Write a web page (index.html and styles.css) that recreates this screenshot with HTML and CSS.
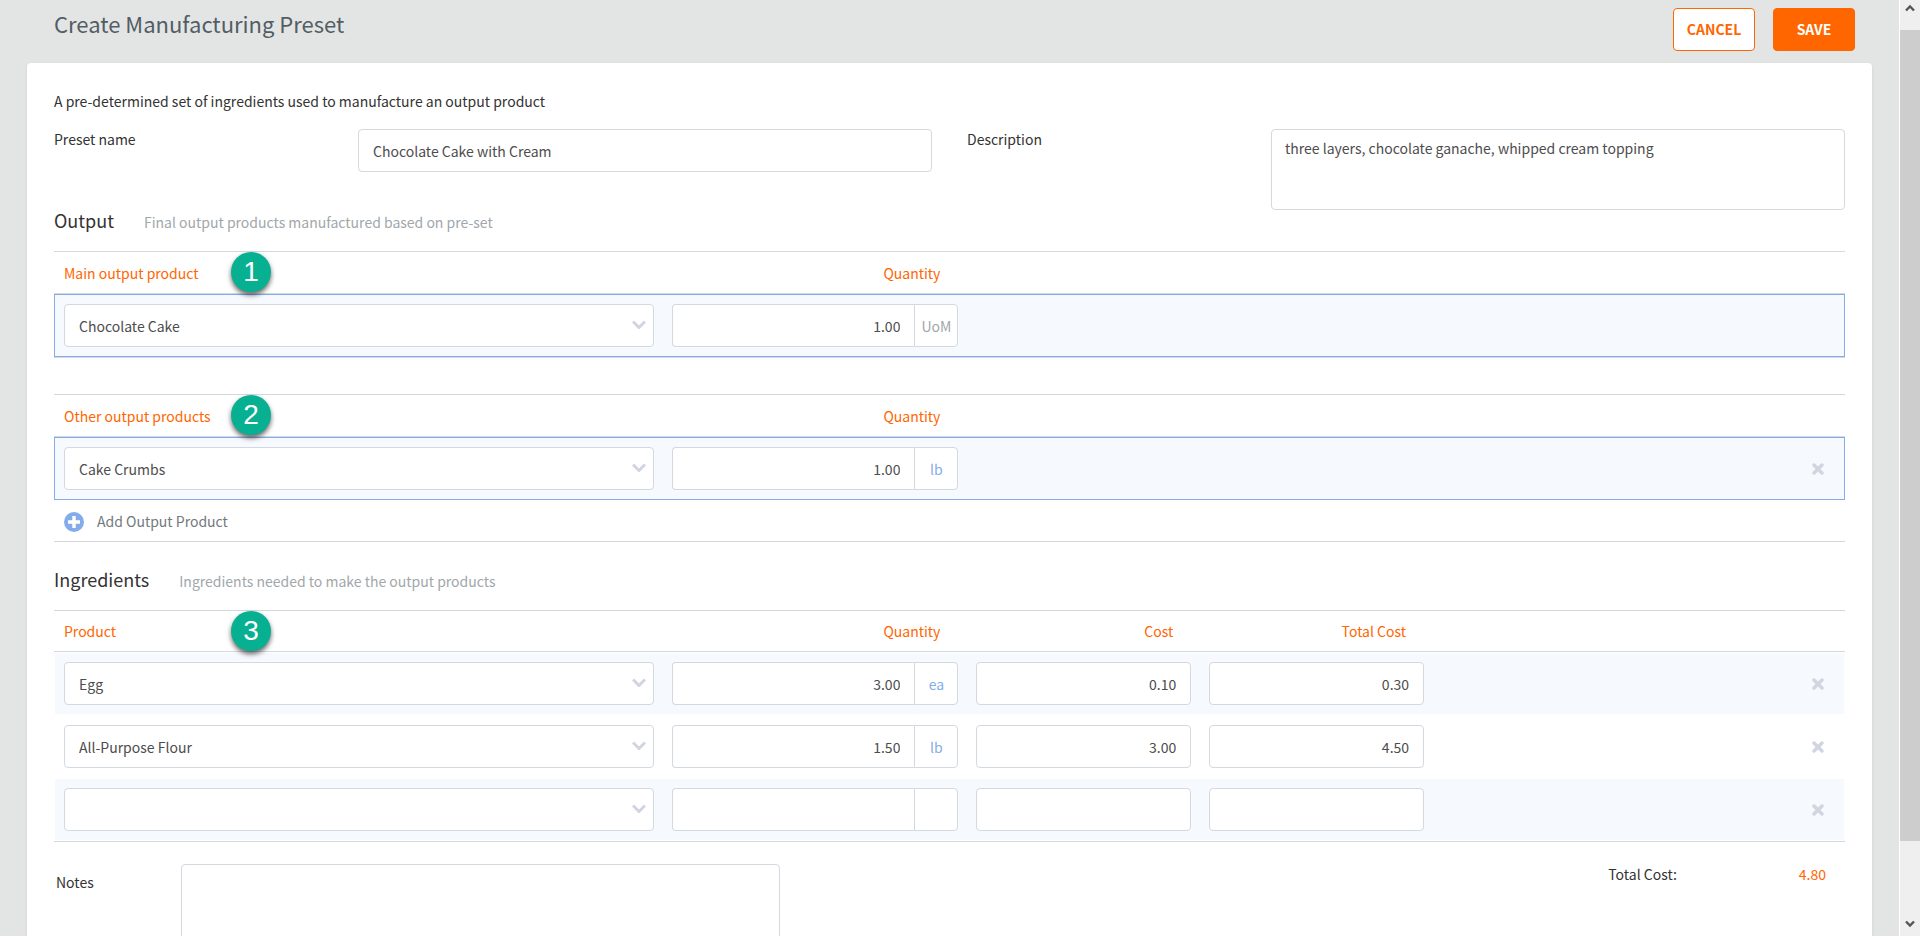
FILE: index.html
```html
<!DOCTYPE html>
<html lang="en">

<head>
    <meta charset="UTF-8">
    <meta name="viewport" content="width=device-width, initial-scale=1.0">
    <title>Create Manufacturing Preset</title>
    <link rel="stylesheet" href="styles.css">
</head>

<body>
    <!-- shared icons -->
    <svg class="icon-defs" aria-hidden="true">
        <symbol id="chevron" viewBox="0 0 14 9">
            <path d="M1 1.5l6 6 6-6" fill="none" stroke="currentColor" stroke-width="3" />
        </symbol>
        <symbol id="cross" viewBox="0 0 12 12">
            <path d="M2 2l8 8M10 2l-8 8" fill="none" stroke="currentColor" stroke-width="3.4" stroke-linecap="round" />
        </symbol>
        <symbol id="plus" viewBox="0 0 20 20">
            <circle cx="10" cy="10" r="10" fill="currentColor" />
            <path d="M10 4v12M4 10h12" stroke="#fff" stroke-width="3.4" />
        </symbol>
        <symbol id="arrow-up" viewBox="0 0 10 8">
            <path d="M1 6.5l4-4 4 4" fill="none" stroke="currentColor" stroke-width="2.4" />
        </symbol>
        <symbol id="arrow-down" viewBox="0 0 10 8">
            <path d="M1 1.5l4 4 4-4" fill="none" stroke="currentColor" stroke-width="2.4" />
        </symbol>
    </svg>

    <form class="page" id="presetForm">
        <header class="page-header">
            <h1>Create Manufacturing Preset</h1>
            <div class="button-group">
                <button type="button" class="btn btn-outline">CANCEL</button>
                <button type="submit" class="btn btn-primary">SAVE</button>
            </div>
        </header>

        <main class="card">
            <p class="intro">A pre-determined set of ingredients used to manufacture an output product</p>

            <div class="field-group">
                <div class="field">
                    <label for="presetName">Preset name</label>
                    <input type="text" id="presetName" class="control" value="Chocolate Cake with Cream">
                </div>
                <div class="field">
                    <label for="description">Description</label>
                    <textarea id="description" class="control description">three layers, chocolate ganache, whipped cream topping</textarea>
                </div>
            </div>

            <div class="section-title">
                <h2>Output</h2>
                <p>Final output products manufactured based on pre-set</p>
            </div>

            <table class="items highlight closed">
                <colgroup>
                    <col class="col-product">
                    <col class="col-quantity">
                    <col class="col-cost">
                    <col class="col-cost">
                    <col>
                </colgroup>
                <thead>
                    <tr>
                        <th>Main output product <span class="badge">1</span></th>
                        <th class="num">Quantity</th>
                        <th colspan="3"></th>
                    </tr>
                </thead>
                <tbody>
                    <tr>
                        <td>
                            <div class="select">
                                <select class="control" aria-label="Main output product">
                                    <option>Chocolate Cake</option>
                                </select>
                                <svg><use href="#chevron" /></svg>
                            </div>
                        </td>
                        <td>
                            <div class="quantity">
                                <input type="text" class="control" value="1.00" aria-label="Quantity">
                                <button type="button" class="unit unit-empty">UoM</button>
                            </div>
                        </td>
                        <td colspan="3"></td>
                    </tr>
                </tbody>
            </table>

            <table class="items highlight">
                <colgroup>
                    <col class="col-product">
                    <col class="col-quantity">
                    <col class="col-cost">
                    <col class="col-cost">
                    <col>
                </colgroup>
                <thead>
                    <tr>
                        <th>Other output products <span class="badge">2</span></th>
                        <th class="num">Quantity</th>
                        <th colspan="3"></th>
                    </tr>
                </thead>
                <tbody>
                    <tr>
                        <td>
                            <div class="select">
                                <select class="control" aria-label="Other output product">
                                    <option>Cake Crumbs</option>
                                </select>
                                <svg><use href="#chevron" /></svg>
                            </div>
                        </td>
                        <td>
                            <div class="quantity">
                                <input type="text" class="control" value="1.00" aria-label="Quantity">
                                <button type="button" class="unit">lb</button>
                            </div>
                        </td>
                        <td colspan="3" class="actions">
                            <button type="button" class="remove" aria-label="Remove"><svg><use href="#cross" /></svg></button>
                        </td>
                    </tr>
                </tbody>
            </table>
            <div class="add-row">
                <button type="button" class="add">
                    <svg><use href="#plus" /></svg>
                    <span>Add Output Product</span>
                </button>
            </div>

            <div class="section-title">
                <h2>Ingredients</h2>
                <p>Ingredients needed to make the output products</p>
            </div>

            <table class="items striped closed">
                <colgroup>
                    <col class="col-product">
                    <col class="col-quantity">
                    <col class="col-cost">
                    <col class="col-cost">
                    <col>
                </colgroup>
                <thead>
                    <tr>
                        <th>Product <span class="badge">3</span></th>
                        <th class="num">Quantity</th>
                        <th class="num">Cost</th>
                        <th class="num">Total Cost</th>
                        <th></th>
                    </tr>
                </thead>
                <tbody>
                    <tr>
                        <td>
                            <div class="select">
                                <select class="control" aria-label="Product">
                                    <option>Egg</option>
                                </select>
                                <svg><use href="#chevron" /></svg>
                            </div>
                        </td>
                        <td>
                            <div class="quantity">
                                <input type="text" class="control" value="3.00" aria-label="Quantity">
                                <button type="button" class="unit">ea</button>
                            </div>
                        </td>
                        <td><input type="text" class="control amount" value="0.10" aria-label="Cost"></td>
                        <td><input type="text" class="control amount" value="0.30" aria-label="Total cost"></td>
                        <td class="actions">
                            <button type="button" class="remove" aria-label="Remove"><svg><use href="#cross" /></svg></button>
                        </td>
                    </tr>
                    <tr>
                        <td>
                            <div class="select">
                                <select class="control" aria-label="Product">
                                    <option>All-Purpose Flour</option>
                                </select>
                                <svg><use href="#chevron" /></svg>
                            </div>
                        </td>
                        <td>
                            <div class="quantity">
                                <input type="text" class="control" value="1.50" aria-label="Quantity">
                                <button type="button" class="unit">lb</button>
                            </div>
                        </td>
                        <td><input type="text" class="control amount" value="3.00" aria-label="Cost"></td>
                        <td><input type="text" class="control amount" value="4.50" aria-label="Total cost"></td>
                        <td class="actions">
                            <button type="button" class="remove" aria-label="Remove"><svg><use href="#cross" /></svg></button>
                        </td>
                    </tr>
                    <tr>
                        <td>
                            <div class="select">
                                <select class="control" aria-label="Product">
                                    <option></option>
                                </select>
                                <svg><use href="#chevron" /></svg>
                            </div>
                        </td>
                        <td>
                            <div class="quantity">
                                <input type="text" class="control" aria-label="Quantity">
                                <button type="button" class="unit" aria-label="Unit"></button>
                            </div>
                        </td>
                        <td><input type="text" class="control amount" aria-label="Cost"></td>
                        <td><input type="text" class="control amount" aria-label="Total cost"></td>
                        <td class="actions">
                            <button type="button" class="remove" aria-label="Remove"><svg><use href="#cross" /></svg></button>
                        </td>
                    </tr>
                </tbody>
            </table>

            <div class="summary">
                <label for="notes">Notes</label>
                <textarea id="notes" class="control notes"></textarea>
                <p class="total">Total Cost: <span>4.80</span></p>
            </div>
        </main>
    </form>

    <div class="scrollbar" aria-hidden="true">
        <svg><use href="#arrow-up" /></svg>
        <div class="thumb"></div>
        <svg><use href="#arrow-down" /></svg>
    </div>
</body>

</html>
```

FILE: styles.css
```css
* {
    margin: 0;
    padding: 0;
    box-sizing: border-box;
}

body {
    display: flex;
    height: 100vh;
    overflow: hidden;
    background-color: #e3e5e4;
    color: #333;
    font-family: "Noto Sans CJK SC", "Open Sans", sans-serif;
    font-size: 14px;
    line-height: 20px;
}

button,
input,
select,
textarea {
    font: inherit;
    color: inherit;
}

button {
    border: none;
    background: none;
    cursor: pointer;
}

h1,
h2,
th {
    font-weight: 400;
}

.icon-defs {
    position: absolute;
    width: 0;
    height: 0;
}

.page {
    flex: 1;
    min-width: 0;
    padding: 8px 27px 0;
}

.page-header {
    display: flex;
    justify-content: space-between;
    align-items: flex-start;
    padding: 0 17px 12px 27px;
}

.page-header h1 {
    color: #525d64;
    font-size: 22px;
    line-height: 30px;
}

.button-group {
    display: flex;
    gap: 18px;
}

.btn {
    width: 82px;
    height: 43px;
    padding-bottom: 2px;
    border: 1px solid #ff6600;
    border-radius: 4px;
    font-weight: 700;
}

.btn-outline {
    background-color: #fff;
    color: #ff6600;
}

.btn-primary {
    background-color: #ff6600;
    color: #fff;
}

.card {
    padding: 28px 27px;
    background-color: #fff;
    border-radius: 4px 4px 0 0;
    box-shadow: 0 1px 3px rgba(0, 0, 0, 0.1);
}

.intro {
    margin-bottom: 18px;
}

.field-group {
    display: grid;
    grid-template-columns: 1fr 1fr;
    gap: 35px;
}

.field {
    display: grid;
    grid-template-columns: 304fr 574fr;
    align-items: start;
}

.control {
    display: block;
    width: 100%;
    height: 43px;
    padding: 0 14px;
    border: 1px solid #d3d9de;
    border-radius: 4px;
    background-color: #fff;
    color: #4d4d4d;
    outline: none;
}

textarea.control {
    padding: 8px 13px;
    resize: none;
}

textarea.description {
    height: 81px;
}

.section-title {
    display: flex;
    align-items: baseline;
    gap: 30px;
    margin-bottom: 19px;
}

.section-title h2 {
    font-size: 18px;
    line-height: 20px;
}

.section-title p {
    color: #a1a7ab;
}

/* product tables */
.items {
    width: 100%;
    table-layout: fixed;
    border-spacing: 0;
    border-top: 1px solid #d3d9dc;
}

.items.closed {
    border-bottom: 1px solid #d3d9dc;
}

.items.highlight.closed {
    margin-bottom: 36px;
}

.col-product {
    width: 34%;
}

.col-quantity {
    width: 17%;
}

.col-cost {
    width: 13%;
}

.items th {
    position: relative;
    height: 42px;
    padding: 0 10px;
    border-bottom: 1px solid #d3d9dc;
    color: #ff6600;
    text-align: left;
}

.items.striped th {
    height: 41px;
}

.items th.num {
    padding-right: 27px;
    text-align: right;
}

.items td {
    padding: 9px;
    border: 0 solid transparent;
    border-width: 1px 0;
    background-clip: padding-box;
}

.items td:first-child {
    border-left-width: 1px;
}

.items td:last-child {
    border-right-width: 1px;
}

.highlight td {
    border-color: #84aceb;
    background-color: #f6f9fe;
}

.striped tr:nth-child(odd) td {
    background-color: #f6f9fe;
}

.badge {
    position: absolute;
    top: 0;
    left: 177px;
    width: 40px;
    height: 40px;
    border-radius: 50%;
    background-color: #08b092;
    box-shadow: 0 3px 5px rgba(0, 0, 0, 0.6);
    color: #fff;
    font-family: "Liberation Sans", Arial, sans-serif;
    font-size: 28px;
    line-height: 40px;
    text-align: center;
}

.select {
    position: relative;
}

.select select {
    appearance: none;
}

.select svg {
    position: absolute;
    top: 16px;
    right: 8px;
    width: 14px;
    height: 9px;
    color: #d0d5e0;
    pointer-events: none;
}

.quantity {
    display: flex;
}

.quantity .control {
    flex: 1;
    min-width: 0;
    border-radius: 4px 0 0 4px;
    border-right: none;
    text-align: right;
}

.amount {
    text-align: right;
}

.unit {
    width: 44px;
    height: 43px;
    border: 1px solid #d3d9de;
    border-radius: 0 4px 4px 0;
    background-color: #fff;
    color: #84aceb;
}

.unit-empty {
    color: #a1a7ab;
}

.items .actions {
    padding-right: 20px;
    padding-bottom: 12px;
    text-align: right;
}

.remove {
    width: 12px;
    height: 12px;
    color: #d0d5e0;
    vertical-align: middle;
}

.remove svg {
    display: block;
    width: 12px;
    height: 12px;
}

.add-row {
    margin-bottom: 27px;
    padding: 11px 10px 9px;
    border-bottom: 1px solid #d3d9dc;
}

.add {
    display: flex;
    align-items: flex-end;
    gap: 13px;
    height: 21px;
    color: #73797d;
}

.add svg {
    width: 20px;
    height: 20px;
    color: #84aceb;
}

.add span {
    align-self: flex-start;
    line-height: 20px;
}

/* notes and total under the ingredients */
.summary {
    display: flex;
    align-items: flex-start;
    margin-top: 22px;
}

.summary label {
    width: 127px;
    padding: 8px 2px;
}

.summary .notes {
    width: calc(34% - 10px);
    height: 120px;
}

.total {
    display: flex;
    gap: 122px;
    margin-left: auto;
    padding-right: 19px;
}

.total span {
    color: #ff6600;
}

/* window scrollbar */
.scrollbar {
    display: flex;
    flex-direction: column;
    justify-content: space-between;
    align-items: center;
    width: 21px;
    padding: 4px 0 8px;
    border-left: 1px solid #fff;
    background-color: #efefef;
    color: #555;
}

.scrollbar svg {
    width: 10px;
    height: 8px;
}

.scrollbar .thumb {
    flex: 1;
    width: 100%;
    margin: 18px 0 79px;
    background-color: #cdcdcd;
}
```
